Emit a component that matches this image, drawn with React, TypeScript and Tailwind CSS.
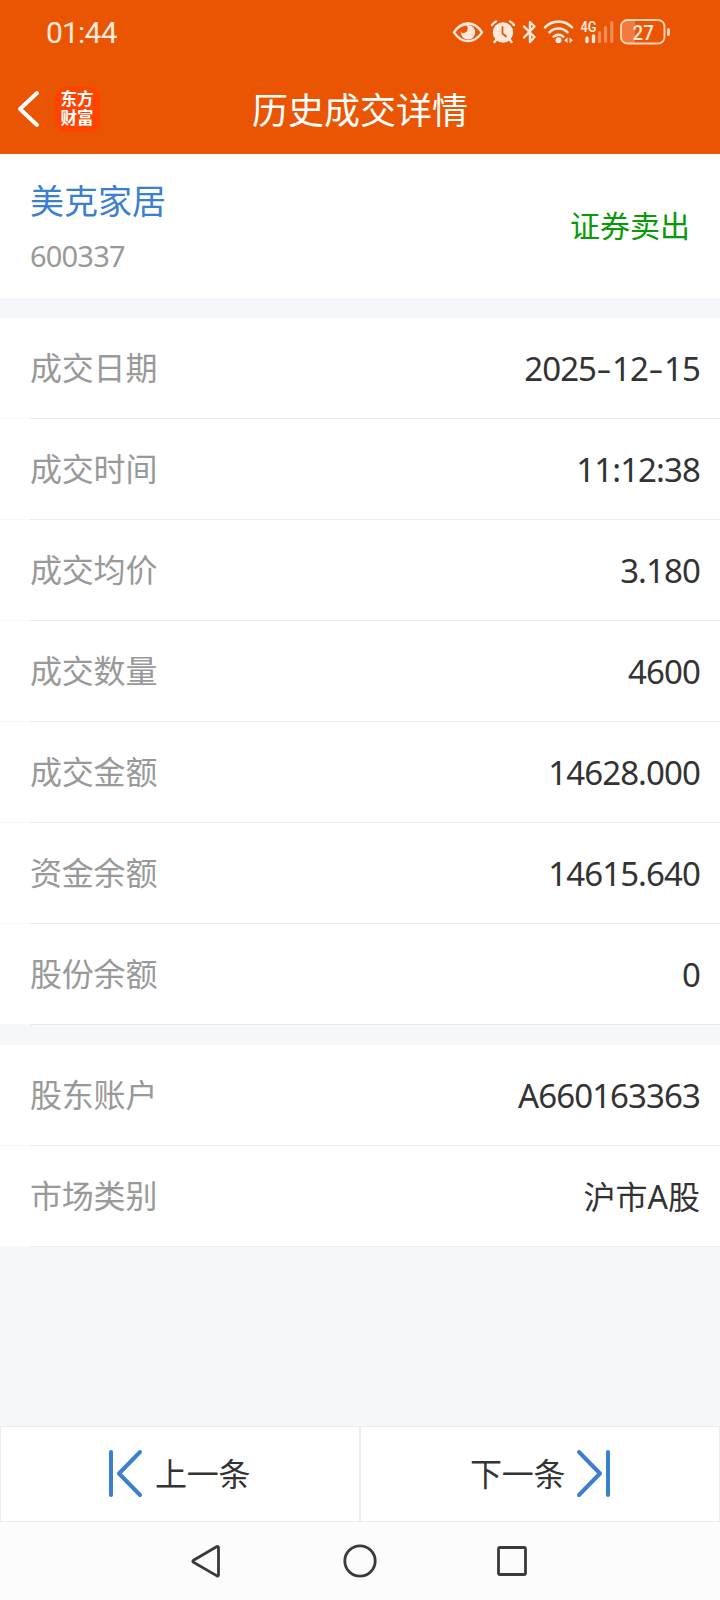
import { Fragment } from "react";
import clsx from "clsx";

type Item = { label: string; value: string };

const tradeItems: Item[] = [
  { label: "成交日期", value: "2025-12-15" },
  { label: "成交时间", value: "11:12:38" },
  { label: "成交均价", value: "3.180" },
  { label: "成交数量", value: "4600" },
  { label: "成交金额", value: "14628.000" },
  { label: "资金余额", value: "14615.640" },
  { label: "股份余额", value: "0" },
];

const accountItems: Item[] = [
  { label: "股东账户", value: "A660163363" },
  { label: "市场类别", value: "沪市A股" },
];

function StatusIcons() {
  return (
    <svg width="240" height="45" viewBox="0 0 240 45" fill="none" stroke="#ffe9dc" strokeLinecap="round" strokeLinejoin="round">
      {/* eye */}
      <path d="M14 22.300c4-6 8.500-8.800 14-8.800S38 16.300 42 22.300c-4 6-8.500 8.800-14 8.800S18 28.300 14 22.300z" strokeWidth="2.400" />
      <circle cx="28" cy="22.300" r="7.200" fill="#ffe9dc" stroke="none" />
      <circle cx="23.500" cy="18.800" r="4.200" fill="#ea5504" stroke="none" />
      <path d="M19 17q4-3 9-3.300" strokeWidth="2.400" />
      {/* alarm */}
      <circle cx="63" cy="22.500" r="10.200" fill="#ffe9dc" stroke="none" />
      <path d="M52 15a10 10 0 0 1 4-3.500M70 11.500a10 10 0 0 1 4 3.500M56.500 29.500l-2 2.500M69.500 29.500l2 2.500" strokeWidth="2.400" />
      <path d="M62.500 17v6.500l3.500 3" stroke="#ea5504" strokeWidth="1.800" />
      {/* bluetooth */}
      <path d="M84 16.500l10.500 10.500-4.500 5V12l4.500 4.500L84 27.500" strokeWidth="2.400" />
      {/* wifi */}
      <path d="M105 17.300a19 19 0 0 1 27 0M109.500 22.300a12.700 12.700 0 0 1 18 0M113.700 26.600a7 7 0 0 1 9.600 0" strokeWidth="2.600" />
      <circle cx="118.500" cy="30.300" r="3" fill="#ffe9dc" stroke="none" />
      <path d="M127.500 27.500v5.500l-3.500-2.700zM129.500 27.500v5.500l3.500-2.700z" fill="#ffe9dc" stroke="none" />
      {/* signal */}
      <path d="M147 28v3.500M153.500 26v5.500" strokeWidth="3.400" />
      <path d="M159.500 22.500v9M165.500 17.500v14M171.800 12.500v19" stroke="#f28e57" strokeWidth="3.200" />
      <text x="140.500" y="22" fill="#ffe9dc" stroke="none" fontFamily="Roboto" fontWeight="600" fontSize="14.500" textLength="16" lengthAdjust="spacingAndGlyphs">4G</text>
      {/* battery */}
      <path d="M188 10.500h7V33h-7a6 6 0 0 1-6-6V16.500a6 6 0 0 1 6-6z" fill="#f07b3c" stroke="none" />
      <rect x="181" y="10" width="43.500" height="23.500" rx="6.500" stroke="#fdd3ba" strokeWidth="1.900" />
      <path d="M228.500 19.500v5" stroke="#fdd3ba" strokeWidth="3" />
      <text x="192.500" y="29.700" fill="#ffe9dc" stroke="none" fontFamily="Roboto" fontWeight="500" fontSize="21" textLength="21.500" lengthAdjust="spacingAndGlyphs">27</text>
    </svg>
  );
}

function Value({ text }: { text: string }) {
  const parts = text.split("-");
  return (
    <span className="text-[33px] leading-none text-[#333]">
      {parts.map((part, i) => (
        <Fragment key={i}>
          {i > 0 && <span className="inline-block w-4 scale-x-140 text-center">-</span>}
          <span className={clsx(/[沪市股]/.test(part) ? "text-[32px]" : "tracking-[-0.9px]")}>{part}</span>
        </Fragment>
      ))}
    </span>
  );
}

function Row({ label, value }: Item) {
  return (
    <div className="h-[101px] bg-white">
      <div className="flex h-[100px] items-center justify-between pl-[30px] pr-5">
        <span className="text-[32px] leading-none tracking-[-0.2px] text-[#999]">{label}</span>
        <Value text={value} />
      </div>
      <div className="flex h-px">
        <div className="w-[30px] bg-[#f8f9fb]" />
        <div className="flex-1 bg-[#ebebeb]" />
      </div>
    </div>
  );
}

export default function App() {
  return (
    <div className="flex h-[1600px] w-[720px] flex-col overflow-hidden bg-[#f6f7fa] font-['Noto_Sans','Noto_Sans_CJK_SC',sans-serif]">
      <header className="h-[154px] bg-[#ea5504] text-white">
        <div className="flex h-16 items-center justify-between pl-[46px] pr-10">
          <span className="pt-0.5 font-[Roboto,sans-serif] text-[30px] leading-none tracking-[-0.8px] text-[#ffe9dc]">01:44</span>
          <StatusIcons />
        </div>
        <div className="grid h-[90px] grid-cols-[1fr_auto_1fr] items-center">
          <div className="flex items-center pl-[17px]">
            <svg width="24" height="40" viewBox="0 0 24 40" fill="none" stroke="#fff" strokeWidth="4" strokeLinecap="round" strokeLinejoin="round">
              <path d="M20 4L3 20l17 16" />
            </svg>
            <div className="ml-[14px] flex h-[45px] w-[45px] justify-center rounded-[10px] bg-[#ff4400] pt-0.5">
              <span className="w-[34px] break-all font-['Noto_Sans_CJK_SC',sans-serif] text-[16.5px] font-bold leading-[19.5px]">东方财富</span>
            </div>
          </div>
          <h1 className="pt-[3px] text-[36px] leading-none">历史成交详情</h1>
          <div />
        </div>
      </header>

      <section className="flex h-36 items-center justify-between bg-white pl-[30px] pr-[30px]">
        <div className="flex flex-col gap-[21px] pt-1">
          <span className="text-[34px] leading-[34px] text-[#3a7fd0]">美克家居</span>
          <span className="text-[29px] leading-[34px] tracking-[-0.8px] text-[#999]">600337</span>
        </div>
        <span className="text-[30px] leading-none text-[#089808]">证券卖出</span>
      </section>

      <section className="mt-5">
        {tradeItems.map((item) => (
          <Row key={item.label} {...item} />
        ))}
      </section>

      <section className="mt-5">
        {accountItems.map((item) => (
          <Row key={item.label} {...item} />
        ))}
      </section>

      <div className="mt-auto grid h-24 grid-cols-2 text-[32px] leading-none text-[#333]">
        <button className="flex items-center border border-[#ebebeb] bg-white pl-[106px]">
          <svg className="mb-[3px]" width="36" height="50" viewBox="0 0 36 50" fill="none" stroke="#3a7fd0" strokeWidth="4" strokeLinecap="round" strokeLinejoin="round">
            <path d="M4 4v43M33 4L12 25.500 33 47" />
          </svg>
          <span className="ml-3 tracking-[-0.3px]">上一条</span>
        </button>
        <button className="flex items-center border border-[#ebebeb] bg-white pl-[109px]">
          <span className="mr-[11px] tracking-[-0.3px]">下一条</span>
          <svg className="mb-[3px]" width="36" height="50" viewBox="0 0 36 50" fill="none" stroke="#3a7fd0" strokeWidth="4" strokeLinecap="round" strokeLinejoin="round">
            <path d="M3 4l21 21.500L3 47M32 4v43" />
          </svg>
        </button>
      </div>

      <nav className="flex h-[78px] justify-center bg-[#fcfcfc]">
        <svg width="360" height="78" viewBox="180 0 360 78" fill="none" stroke="#3a3a3a" strokeWidth="2.800" strokeLinejoin="round">
          <path d="M217 24.500q1.500-.6 1.500 1.200v27q0 1.800-1.500 1.200L193.500 40.300q-1.400-1 0-2z" />
          <circle cx="360" cy="39" r="15.200" />
          <rect x="498.500" y="25.500" width="27" height="27" rx="1.500" />
        </svg>
      </nav>
    </div>
  );
}
